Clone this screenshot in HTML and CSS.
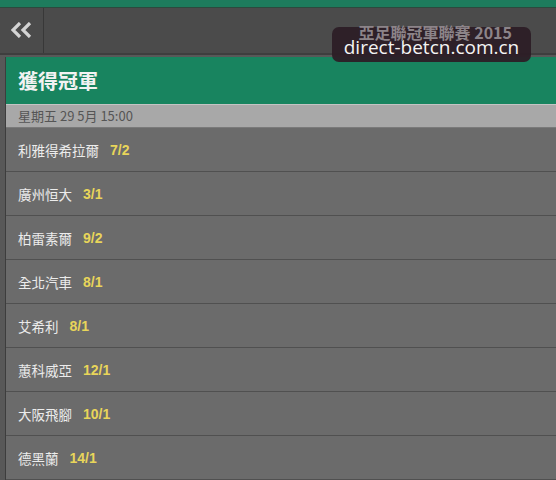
FILE: index.html
```html
<!DOCTYPE html>
<html lang="zh-Hant">
<head>
<meta charset="utf-8">
<title>獲得冠軍</title>
<link rel="stylesheet" href="styles.css">
</head>
<body>
<div class="topbar"></div>
<div class="header">
  <div class="back">
    <svg width="22" height="16" viewBox="0 0 22 16"><polyline points="9,1 2,8 9,15" fill="none" stroke="#d4d4d4" stroke-width="3.2"/><polyline points="19,1 12,8 19,15" fill="none" stroke="#d4d4d4" stroke-width="3.2"/></svg>
  </div>
  <div class="title">亞足聯冠軍聯賽 2015</div>
  <div class="watermark">direct-betcn.com.cn</div>
</div>
<div class="content">
  <div class="panel">
    <div class="panel-head">獲得冠軍</div>
    <div class="date">星期五 29 5月 15:00</div>
    <div class="row"><span class="name">利雅得希拉爾</span><span class="odds">7/2</span></div>
    <div class="row"><span class="name">廣州恒大</span><span class="odds">3/1</span></div>
    <div class="row"><span class="name">柏雷素爾</span><span class="odds">9/2</span></div>
    <div class="row"><span class="name">全北汽車</span><span class="odds">8/1</span></div>
    <div class="row"><span class="name">艾希利</span><span class="odds">8/1</span></div>
    <div class="row"><span class="name">蕙科威亞</span><span class="odds">12/1</span></div>
    <div class="row"><span class="name">大阪飛腳</span><span class="odds">10/1</span></div>
    <div class="row"><span class="name">德黑蘭</span><span class="odds">14/1</span></div>
  </div>
</div>
</body>
</html>
```
FILE: styles.css
```css
html, body {
  margin: 0;
  padding: 0;
  background: #585858;
  font-family: "Noto Sans CJK TC", "Liberation Sans", sans-serif;
  overflow: hidden;
}
.topbar {
  height: 7px;
  background: #1d7c5d;
  border-bottom: 1px solid #2c4a3e;
}
.header {
  position: relative;
  height: 45px;
  background: #4b4b4b;
  display: flex;
  border-bottom: 2px solid #3e3e3e;
}
.back {
  width: 44px;
  border-right: 1px solid #383838;
  display: flex;
  align-items: center;
  justify-content: center;
  padding-bottom: 2px;
  box-sizing: border-box;
}
.title {
  flex: 1;
  text-align: right;
  padding-right: 44px;
  padding-top: 14px;
  font-size: 16px;
  font-weight: bold;
  line-height: 20px;
  color: #8c8489;
  position: relative;
  z-index: 2;
}
.watermark {
  position: absolute;
  left: 332px;
  top: 19px;
  width: 199px;
  height: 35px;
  border-radius: 7px;
  background: rgba(44, 30, 38, 0.95);
  color: #f4f4f4;
  font-family: "Open Sans", "DejaVu Sans", sans-serif;
  font-size: 19px;
  line-height: 35px;
  text-align: center;
  z-index: 1;
  padding-top: 3px;
  box-sizing: border-box;
}
.content {
  padding: 2px 0 0 5px;
}
.panel {
  border-left: 1px solid #3d3d3d;
}
.panel-head {
  height: 47px;
  background: #18845f;
  color: #f2f2f2;
  font-size: 20px;
  font-weight: bold;
  line-height: 47px;
  padding-left: 12px;
}
.date {
  height: 22px;
  background: #a8a8a8;
  border-top: 1px solid #c4c4c4;
  border-bottom: 1px solid #7a7a7a;
  color: #555555;
  font-size: 13px;
  line-height: 22px;
  padding-left: 12px;
}
.row {
  height: 43px;
  background: #6b6b6b;
  border-bottom: 1px solid #505050;
  display: flex;
  align-items: center;
  gap: 11px;
  padding-left: 12px;
  font-size: 13.5px;
}
.name {
  color: #ececec;
}
.odds {
  color: #e8d55a;
  font-family: "Liberation Sans", sans-serif;
  font-weight: bold;
  font-size: 14px;
}
```
